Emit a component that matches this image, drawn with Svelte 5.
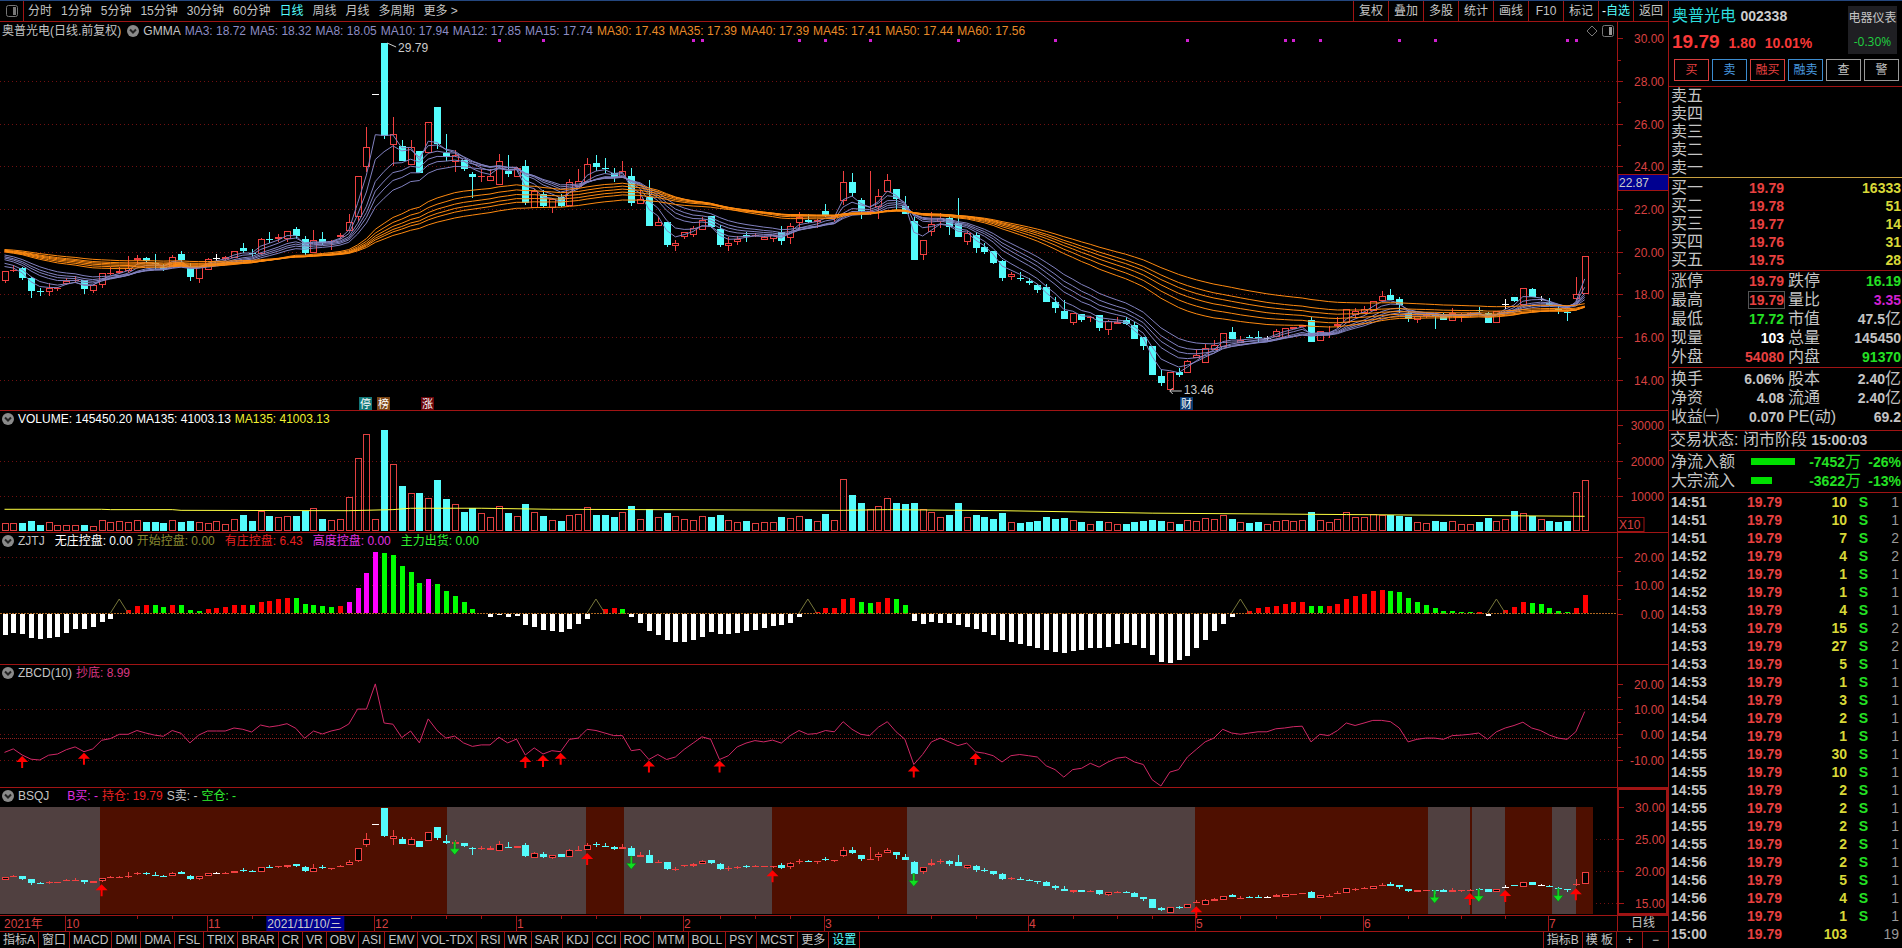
<script>
    const periods = ["分时", "1分钟", "5分钟", "15分钟", "30分钟", "60分钟", "日线", "周线", "月线", "多周期", "更多 >"];
    const tools = ["复权", "叠加", "多股", "统计", "画线", "F10", "标记", "自选", "返回"];
    const indicators = ["指标A", "窗口", "MACD", "DMI", "DMA", "FSL", "TRIX", "BRAR", "CR", "VR", "OBV", "ASI", "EMV", "VOL-TDX", "RSI", "WR", "SAR", "KDJ", "CCI", "ROC", "MTM", "BOLL", "PSY", "MCST", "更多", "设置"];

    // open, high, low, close
    const candles = [
        [18.64,19.09,18.55,19.09],[19.09,19.37,19.03,19.16],[19.23,19.28,18.67,18.77],[18.77,18.83,17.83,18.17],[18.15,18.31,17.92,18.14],
        [18.09,18.52,17.94,18.28],[18.28,18.32,18.13,18.30],[18.48,18.75,18.42,18.62],[18.60,18.86,18.52,18.67],[18.67,18.67,18.02,18.25],
        [18.17,18.42,18.08,18.42],[18.42,18.98,18.31,18.98],[18.98,19.30,18.92,19.02],[19.00,19.30,18.95,19.09],[19.10,19.81,18.98,19.25],
        [19.59,19.84,19.40,19.70],[19.70,19.77,19.45,19.58],[19.45,19.89,19.20,19.40],[19.30,19.40,19.10,19.20],[19.30,19.84,19.30,19.75],
        [19.90,20.03,19.53,19.60],[19.27,19.45,18.60,18.83],[18.73,19.30,18.55,19.30],[19.16,19.70,19.16,19.64],[19.69,19.89,19.55,19.69],
        [19.65,19.80,19.55,19.75],[19.70,20.02,19.70,20.02],[20.17,20.41,19.92,20.03],[19.95,20.14,19.80,19.92],[19.90,20.66,19.90,20.58],
        [20.58,20.90,20.42,20.53],[20.60,20.83,20.47,20.70],[20.58,20.95,20.45,20.95],[21.06,21.14,20.62,20.75],[20.60,20.73,19.84,19.95],
        [19.92,21.02,19.92,20.53],[20.60,20.90,20.30,20.42],[20.45,20.53,20.08,20.52],[20.70,20.86,20.58,20.77],[20.95,21.78,20.95,21.38],
        [21.61,23.53,21.40,23.53],[23.98,25.84,23.75,24.91],[27.37,27.37,27.37,27.37],[29.79,29.79,25.27,25.41],[25.02,26.31,24.02,25.50],
        [24.97,25.23,24.25,24.25],[24.05,25.23,24.05,24.91],[24.72,24.72,23.69,23.69],[24.61,26.06,24.61,26.06],[26.78,26.78,24.83,25.06],
        [24.61,25.53,24.25,24.42],[24.19,24.77,23.75,24.53],[24.30,24.30,23.80,23.88],[23.64,23.75,22.52,23.52],[23.48,23.88,23.28,23.53],
        [23.33,23.88,23.33,23.53],[23.11,24.59,23.11,24.23],[23.80,24.55,23.52,23.66],[23.52,23.95,23.52,23.90],[24.02,24.30,22.20,22.28],
        [22.03,22.95,22.03,22.84],[22.70,22.89,22.08,22.16],[22.03,22.45,21.83,22.45],[22.58,22.70,22.10,22.14],[22.16,23.41,22.16,23.25],
        [23.05,23.88,23.05,23.31],[23.28,24.39,23.28,24.11],[24.16,24.53,23.78,23.98],[23.92,24.39,23.70,23.89],[23.70,23.90,23.28,23.48],
        [23.44,24.23,23.44,23.77],[23.55,23.92,22.16,22.28],[22.25,22.90,22.25,22.48],[22.55,23.34,21.22,21.22],[21.19,21.64,21.19,21.38],
        [21.38,21.38,20.23,20.31],[20.28,20.55,20.05,20.38],[20.70,20.91,20.58,20.91],[20.80,21.20,20.67,21.09],[21.03,21.64,21.03,21.48],
        [21.67,21.67,21.10,21.17],[21.05,21.25,20.23,20.33],[20.28,20.70,20.05,20.39],[20.45,20.73,20.33,20.61],[20.78,20.94,20.47,20.75],
        [20.77,20.86,20.70,20.80],[20.56,20.75,20.56,20.70],[20.59,20.77,20.47,20.77],[20.91,21.20,20.33,20.52],[20.62,21.36,20.34,21.19],
        [21.36,21.84,21.02,21.61],[21.50,21.78,21.33,21.41],[21.41,21.55,21.09,21.48],[21.91,22.23,21.60,21.73],[21.60,21.70,21.40,21.66],
        [22.39,23.80,22.20,23.25],[23.27,23.69,22.61,22.77],[22.42,22.52,21.53,21.92],[21.83,23.80,21.70,21.90],[22.10,22.94,21.53,22.61],
        [22.81,23.64,22.81,23.34],[22.94,22.94,21.92,22.45],[22.14,22.61,21.78,21.78],[21.44,21.60,19.61,19.61],[19.86,20.55,19.60,20.55],
        [20.91,21.84,20.75,21.28],[21.40,21.80,21.10,21.56],[21.56,21.72,20.80,21.14],[21.36,22.52,20.70,20.70],[20.47,20.97,20.33,20.88],
        [20.77,20.94,19.92,20.17],[20.22,20.39,19.89,20.00],[20.03,20.03,19.40,19.48],[19.58,19.62,18.64,18.77],[18.83,19.05,18.67,18.94],
        [18.78,19.05,18.62,18.75],[18.62,18.77,18.42,18.55],[18.42,18.50,18.05,18.22],[18.34,18.50,17.66,17.66],[17.64,17.89,17.11,17.37],
        [17.23,17.73,16.86,16.86],[16.67,17.12,16.56,17.12],[17.06,17.06,16.70,16.77],[16.87,17.00,16.72,16.95],[17.03,17.03,16.30,16.44],
        [16.31,16.80,16.11,16.73],[16.62,16.92,16.62,16.70],[16.80,16.95,16.55,16.62],[16.55,16.70,15.92,15.92],[15.98,15.98,15.40,15.59],
        [15.58,15.58,14.23,14.23],[14.17,14.45,13.72,13.86],[13.53,14.36,13.46,14.36],[14.34,14.56,14.14,14.23],[14.30,14.90,14.30,14.86],
        [15.00,15.42,15.00,15.17],[14.77,15.67,14.77,15.47],[15.40,15.86,15.40,15.60],[15.55,16.17,15.55,16.17],[16.23,16.48,15.92,15.92],
        [15.70,16.05,15.70,15.86],[16.00,16.11,15.94,15.94],[15.98,16.28,15.78,15.97],[15.95,16.05,15.80,15.95],[15.98,16.37,15.98,16.27],
        [15.94,16.40,15.94,16.40],[16.38,16.45,16.38,16.45],[16.45,16.58,16.45,16.58],[16.80,16.92,15.77,15.77],[15.83,16.27,15.80,16.27],
        [16.10,16.50,15.95,16.17],[16.53,16.95,16.40,16.60],[16.64,17.30,16.64,17.30],[17.03,17.37,16.90,17.23],[17.14,17.45,17.14,17.30],
        [17.20,17.70,17.20,17.67],[17.67,18.17,17.67,17.90],[17.97,18.25,17.73,17.73],[17.78,17.89,17.14,17.48],[17.14,17.20,16.70,16.83],
        [16.77,16.98,16.67,16.98],[16.97,17.10,16.90,17.02],[17.05,17.10,16.37,17.00],[17.03,17.14,16.81,16.81],[16.73,17.36,16.73,17.11],
        [17.00,17.12,16.70,17.05],[17.03,17.15,16.95,17.10],[17.25,17.42,17.10,17.20],[17.14,17.18,16.66,16.66],[16.67,17.22,16.67,17.22],
        [17.53,17.78,17.30,17.53],[17.87,17.87,17.65,17.70],[17.50,18.28,17.50,18.28],[18.25,18.30,17.87,17.87],[17.78,17.92,17.68,17.78],
        [17.60,17.82,17.45,17.50],[17.31,17.48,17.07,17.26],[17.17,17.20,16.76,17.14],[17.80,18.80,17.72,17.99],[17.99,19.79,17.99,19.79],
    ];

    // hundreds of lots
    const volumes = [
        22,22,22,28,16,25,16,16,16,16,13,30,25,28,25,30,25,25,22,30,25,28,25,22,28,19,33,45,28,56,
        42,39,42,42,56,64,33,30,33,96,206,275,33,287,190,127,107,107,92,144,90,76,53,64,50,39,70,50,42,76,
        53,42,30,28,45,48,68,46,44,40,52,69,32,62,40,50,42,33,30,42,40,46,30,24,28,22,24,26,38,36,
        42,32,28,48,30,148,103,79,62,70,93,79,76,79,62,52,40,44,79,40,44,38,34,50,24,22,24,28,40,34,
        35,30,24,20,28,24,20,18,26,28,30,28,26,18,30,28,36,34,45,34,24,22,24,20,28,30,28,30,52,30,
        26,34,52,40,38,48,46,44,42,38,26,22,28,24,28,20,18,24,36,28,34,55,50,42,34,28,26,28,110,145,
    ];
    const volumeAverage = [[0, 61], [11, 61], [12, 60], [19, 60], [20, 58], [39, 57], [44, 60], [46, 64], [54, 64], [62, 61], [95, 58], [100, 60], [113, 57], [130, 50], [152, 46], [179, 41]];

    const control = [
        -7.5,-6.8,-7.2,-8.6,-8.9,-8.6,-8.2,-6.8,-5.4,-5.4,-4.7,-2.9,-1.9,0,1.2,2.6,2.9,2.9,2.2,2.9,2.9,1.2,0.8,1.5,1.9,2.2,2.9,3,2.9,4,
        4.4,5.1,5.4,5.4,3.3,2.9,2.6,2.2,2.6,4,8.9,14.2,21.6,21.3,20.6,16.7,14.6,10.7,12.1,10.4,7.9,6.1,4,1.5,0,-1.2,-0.5,-1.2,-0.8,-3.8,
        -4.5,-5.8,-6.1,-6.3,-5.3,-3.5,-1.8,0,1.7,1.8,1.6,-1,-3,-6,-7.5,-9,-10,-9.8,-9,-8,-6.5,-7,-7,-6.8,-6,-5.5,-5,-4.3,-4,-3,
        -1,0,0.4,1.8,2,5,5.6,4.2,3.8,4,5.5,5,3,-2.5,-3.5,-2.8,-3,-3.3,-4,-4.5,-5.2,-6.2,-7.5,-9,-10,-10.6,-11.2,-11.8,-12.5,-13.3,
        -13.6,-13.2,-12.6,-12,-12,-11.5,-10.7,-10.3,-11,-12,-14.5,-17,-17.3,-16.2,-14.8,-12,-9,-6,-3.5,-1.2,0,1,1.8,2.2,2.8,3.4,4,4.2,2.6,2.5,
        2.6,3.4,5.2,6.2,7,7.8,8.2,8,7.4,5.4,4,3,1.8,1,0.8,0.5,0.4,0.6,-0.8,0,1.2,2.4,4,3.8,3.2,2,1,0.5,2,6.4,
    ];
    const highControl = [39, 40, 41, 42, 48];
    const peaks = [13, 67, 91, 140, 169];

    const bottom = [
        -7.2,-5.8,-8.2,-9.9,-10.2,-8.3,-7.8,-6.1,-5,-6.9,-5.8,-2.4,-1.7,0,0,1.5,0.5,-0.3,-0.8,1.5,0.4,-3.4,-0.3,1.3,1.3,1.3,2.5,2,0.9,3.7,
        2.9,3.4,4.2,2.4,-1.6,1.3,0.1,1.3,2.1,4.1,10,10,20,4.5,4,-1.3,1.3,-3.4,6.1,1.5,-1.5,-0.7,-3.4,-4.8,-4.2,-4.2,-1.2,-3.4,-1.9,-8.2,
        -5.4,-7.8,-6.5,-6.9,-2,-1.5,2,1.5,0.5,-0.5,-0.5,-6.5,-6,-10,-8,-10,-9,-6,-3.5,-1,-2,-10,-8.5,-5,-3.5,-2.5,-3,-2.3,-3.5,-0.5,
        1.5,0,0.3,1.5,1,5,2,0,-0.5,2.8,5,1,-2,-12,-8,-3,-1.5,-3,-4.5,-3.5,-7,-7.5,-8.5,-11,-8.5,-8,-8.5,-9,-12.5,-14,
        -17,-14,-13.5,-11.5,-13,-11,-9.5,-9,-11,-12,-18,-20.5,-15,-14,-9,-6,-3,-1.5,2,0.5,0,0.5,1,1,2.2,2.5,3,3.2,-3,0,
        -0.5,1.5,4.5,3.5,4.5,5.5,5.5,5,2.5,-3,-2,-1.5,-1.5,-2,-0.5,-0.3,0,0.5,-2,1,2.5,3.5,4.8,2.5,1.5,-0.3,-1.5,-2,1,9,
    ];
    const bottomSignals = [2, 9, 59, 61, 63, 73, 81, 103, 110];

    const notices = [56, 61, 78, 79, 90, 93, 98, 108, 119, 134, 145, 146, 149, 158, 162, 177, 178];
    const badges = [
        { at: 41, text: "停", color: "#137878" },
        { at: 43, text: "榜", color: "#7c4514" },
        { at: 48, text: "涨", color: "#6b0509" },
        { at: 134, text: "财", color: "#0b3a70" },
    ];

    // holding (true) and flat (false) stretches, by bar
    const stretches = [[-0.5, 10.8, false], [10.8, 50.1, true], [50.1, 65.9, false], [65.9, 70.2, true], [70.2, 86.9, false], [86.9, 102.2, true], [102.2, 134.9, false], [134.9, 161.2, true], [161.2, 166, false], [166, 166.2, true], [166.2, 170, false], [170, 175.3, true], [175.3, 178, false], [178, 179.9, true]];
    const buys = [11, 66, 87, 135, 166, 170, 178];
    const sells = [51, 71, 103, 162, 167, 176];

    const months = [[7, "10"], [23, "11"], [42, "12"], [58, "1"], [77, "2"], [93, "3"], [116, "4"], [135, "5"], [154, "6"], [175, "7"]];
    const weeks = [15, 19, 28, 46, 50, 54, 63, 67, 72, 81, 85, 89, 99, 105, 110, 121, 126, 130, 140, 144, 149, 159, 165, 170];

    const averages = [
        [3, 19.3, "18.72"], [5, 19.45, "18.32"], [8, 19.62, "18.05"], [10, 19.7, "17.94"], [12, 19.76, "17.85"], [15, 19.84, "17.74"],
        [30, 19.98, "17.43"], [35, 20, "17.39"], [40, 20.02, "17.39"], [45, 20.04, "17.41"], [50, 20.06, "17.44"], [60, 20.1, "17.56"],
    ];

    const bids = [["买一", "19.79", 16333], ["买二", "19.78", 51], ["买三", "19.77", 14], ["买四", "19.76", 31], ["买五", "19.75", 28]];
    const asks = ["卖五", "卖四", "卖三", "卖二", "卖一"];
    // label, value, colour, unit
    const quote = [
        [["涨停", "19.79", "red"], ["跌停", "16.19", "green"]],
        [["最高", "19.79", "red boxed"], ["量比", "3.35", "purple"]],
        [["最低", "17.72", "green"], ["市值", "47.5", "", "亿"]],
        [["现量", "103", "white"], ["总量", "145450", ""]],
        [["外盘", "54080", "red"], ["内盘", "91370", "green"]],
    ];
    const finance = [
        [["换手", "6.06%", ""], ["股本", "2.40", "", "亿"]],
        [["净资", "4.08", ""], ["流通", "2.40", "", "亿"]],
        [["收益㈠", "0.070", ""], ["PE(动)", "69.2", ""]],
    ];
    const flows = [["净流入额", 44, "-7452", "-26%"], ["大宗流入", 21, "-3622", "-13%"]];
    const trades = [
        ["14:51", 10, 1], ["14:51", 10, 1], ["14:51", 7, 2], ["14:52", 4, 2], ["14:52", 1, 1], ["14:52", 1, 1], ["14:53", 4, 1], ["14:53", 15, 2], ["14:53", 27, 2],
        ["14:53", 5, 1], ["14:53", 1, 1], ["14:54", 3, 1], ["14:54", 2, 1], ["14:54", 1, 1], ["14:55", 30, 1], ["14:55", 10, 1], ["14:55", 2, 1],
        ["14:55", 2, 1], ["14:55", 2, 1], ["14:55", 2, 1], ["14:56", 2, 1], ["14:56", 5, 1], ["14:56", 4, 1], ["14:56", 1, 1], ["15:00", 103, 19],
    ];

    let width = 1617;
    $: step = (width - 28) / 180;
    $: x = (i) => 4.5 + i * step;

    // value to y inside each panel
    const yMain = (v) => 16.3 + (30 - v) * 21.33;
    const yVol = (v) => 119.7 - v * 0.351;
    const yCtl = (v) => 80.5 - v * 2.84;
    const yBot = (v) => 69.3 - v * 2.52;
    const yBs = (v) => 18.7 + (30 - v) * 6.43;

    function ema(n, seed) {
        let last = seed;
        return candles.map((c, i) => {
            if (i > 0) last += (c[3] - last) * 2 / (n + 1);
            return last;
        });
    }

    const lines = averages.map(([n, seed]) => ({ color: n < 20 ? "#8282c0" : "#ff8a10", values: ema(n, seed) }));

    function points(values, y, x) {
        return values.map((v, i) => `${x(i).toFixed(1)},${y(v).toFixed(1)}`).join(" ");
    }

    function tone(c) {
        if (c[3] > c[0]) return "up";
        return c[3] < c[0] ? "down" : "flat";
    }

    function controlColor(v, i) {
        if (v < 0) return "#fff";
        if (highControl.includes(i)) return "#f0f";
        return v > control[i - 1] ? "#f00" : "#0f0";
    }
</script>

{#snippet toggle()}
    <svg class="toggle" width="12" height="12" viewBox="0 0 12 12">
        <circle cx="6" cy="6" r="6" fill="#8a8a8a" />
        <path d="M3 4.5 6 7.5 9 4.5" fill="none" stroke="#222" stroke-width="2" />
    </svg>
{/snippet}

{#snippet candle(c, cx, y, fill)}
    {@const t = tone(c)}
    {@const top = Math.round(y(Math.max(c[0], c[3])))}
    {@const low = Math.round(y(Math.min(c[0], c[3])))}
    {@const mid = Math.round(cx)}
    <g class={t}>
        <path d="M{mid + 0.5} {Math.round(y(c[1]))}V{top}M{mid + 0.5} {low}V{Math.round(y(c[2]))}" />
        {#if low - top < 2}
            <rect class="solid" x={mid - 3} y={top} width="7" height={Math.max(1, low - top)} />
        {:else if t == "up"}
            <rect x={mid - 2.5} y={top + 0.5} width="6" height={low - top - 1} {fill} />
        {:else}
            <rect class="solid" x={mid - 3} y={top} width="7" height={low - top} />
        {/if}
    </g>
{/snippet}

{#snippet grid(ys)}
    {#each ys as y}
        <line class="dots" x1="0" x2={width} y1={Math.round(y) + 0.5} y2={Math.round(y) + 0.5} />
    {/each}
{/snippet}

{#snippet axis(labels, minor)}
    {#each labels as [y, text]}
        <path class="tick" d="M0 {Math.round(y) + 0.5}h5" />
        <text x="46" y={Math.round(y) + 5} text-anchor="end">{text}</text>
    {/each}
    {#each minor as y}
        <path class="tick" d="M0 {Math.round(y) + 0.5}h3" />
    {/each}
{/snippet}

{#snippet arrowUp(cx, y)}
    <path d="M{cx} {y}l6 6h-5v6h-2v-6h-5z" fill="#f00" />
{/snippet}

{#snippet pairs(rows)}
    {#each rows as row}
        <tr>
            {#each row as [label, value, color, unit]}
                <th>{label}</th>
                <td><b class={color}>{value}</b>{unit ?? ""}</td>
            {/each}
        </tr>
    {/each}
{/snippet}

<div class="app">
    <main>
        <nav class="toolbar">
            <button class="side" aria-label="侧栏">
                <svg width="12" height="12" viewBox="0 0 12 12"><rect x=".5" y=".5" width="11" height="11" rx="2" fill="none" stroke="#777" /><rect x="7" y="2" width="3" height="8" fill="#777" /></svg>
            </button>
            {#each periods as p}
                <button class="period" class:active={p == "日线"}>{p}</button>
            {/each}
            <div class="tools">
                {#each tools as t}
                    <button class:active={t == "自选"}>{#if t == "自选"}<span>-</span>{/if}{t}</button>
                {/each}
            </div>
        </nav>

        <section class="panel price">
            <div class="plot" bind:clientWidth={width}>
                <header>
                    <span class="name">奥普光电(日线.前复权)</span>
                    {@render toggle()}
                    <span>GMMA</span>
                    {#each averages as [n, , value]}
                        <span class={n < 20 ? "short" : "long"}>MA{n}: {value}</span>
                    {/each}
                    <svg class="marks" width="28" height="12" viewBox="0 0 28 12" fill="none" stroke="#777">
                        <path d="M6 1l5 5-5 5-5-5z" />
                        <rect x="16.5" y=".5" width="11" height="11" rx="2" />
                        <rect x="23" y="2" width="3" height="8" fill="#999" stroke="none" />
                    </svg>
                </header>
                <svg viewBox="0 18 {width} 370" height="370">
                    {@render grid([28, 26, 24, 22, 20, 18, 16, 14].map(yMain))}
                    {#each notices as i}
                        <rect x={Math.round(x(i)) - 1} y="17" width="3" height="3" fill="#d020d0" />
                    {/each}
                    {#each candles as c, i}
                        {@render candle(c, x(i), yMain, "none")}
                    {/each}
                    {#each lines as l}
                        <polyline points={points(l.values, yMain, x)} stroke={l.color} />
                    {/each}
                    <path d="M{x(43) + 3} 21l9 4M{x(132)} 369h12m-12 0l3-3m-3 3l3 3" stroke="#ccc" fill="none" />
                    <text class="value" x={x(43) + 14} y="30">29.79</text>
                    <text class="value" x={x(132) + 14} y="372">13.46</text>
                    {#each badges as b}
                        <rect x={Math.round(x(b.at)) - 7} y="375" width="13" height="13" fill={b.color} />
                        <text class="badge" x={Math.round(x(b.at)) - 0.5} y="386" text-anchor="middle">{b.text}</text>
                    {/each}
                </svg>
            </div>
            <svg class="axis" height="388">
                {@render axis([30, 28, 26, 24, 22, 20, 18, 16, 14].map((v) => [yMain(v), v.toFixed(2)]), [29, 27, 25, 23, 21, 19, 17, 15].map(yMain))}
                <rect x="0" y="152.5" width="51" height="16" fill="#000090" stroke="#a01414" />
                <text class="value" x="1" y="165">22.87</text>
            </svg>
        </section>

        <section class="panel volume">
            <div class="plot">
                <header class="white">
                    {@render toggle()}
                    <span>VOLUME: 145450.20</span>
                    <span>MA135: 41003.13</span>
                    <span class="yellow">MA135: 41003.13</span>
                </header>
                <svg viewBox="0 16 {width} 105" height="105">
                    {@render grid([yVol(200), yVol(100)])}
                    {#each volumes as v, i}
                        {@const y = Math.round(yVol(v))}
                        {@const left = Math.round(x(i)) - 3}
                        {#if candles[i][3] < candles[i][0]}
                            <rect class="bar" x={left} {y} width="7" height={120 - y} fill="#54fcfc" />
                        {:else}
                            <rect class="bar" x={left + 0.5} y={y + 0.5} width="6" height={119 - y} fill="none" stroke="#e04040" />
                        {/if}
                    {/each}
                    <polyline points={volumeAverage.map(([i, v]) => `${x(i)},${yVol(v)}`).join(" ")} stroke="#ffff40" />
                </svg>
            </div>
            <svg class="axis" height="121">
                {@render axis([[yVol(300), "30000"], [yVol(200), "20000"], [yVol(100), "10000"]], [yVol(250), yVol(150)])}
                <rect x="-1" y="106.5" width="27" height="14" fill="none" stroke="#a01414" />
                <text x="1" y="118">X10</text>
            </svg>
        </section>

        <section class="panel control">
            <div class="plot">
                <header>
                    {@render toggle()}
                    <span>ZJTJ</span>
                    <span class="white first">无庄控盘: 0.00</span>
                    <span class="olive">开始控盘: 0.00</span>
                    <span class="crimson wide">有庄控盘: 6.43</span>
                    <span class="magenta wide">高度控盘: 0.00</span>
                    <span class="lime wide">主力出货: 0.00</span>
                </header>
                <svg viewBox="0 16 {width} 115" height="115">
                    {@render grid([yCtl(20), yCtl(10)])}
                    {#each control as v, i}
                        {@const y = Math.round(yCtl(Math.max(v, 0)))}
                        <rect class="bar" x={Math.round(x(i)) - 2} {y} width="5" height={Math.round(Math.abs(v) * 2.84)} fill={controlColor(v, i)} />
                    {/each}
                    <line x1="0" x2={width} y1="80.5" y2="80.5" stroke="#b06820" stroke-dasharray="2 1" />
                    {#each peaks as i}
                        <path d="M{x(i - 1)} 80L{x(i)} 66L{x(i + 1)} 80" fill="none" stroke="#77773a" />
                    {/each}
                </svg>
            </div>
            <svg class="axis" height="131">
                {@render axis([[yCtl(20), "20.00"], [yCtl(10), "10.00"], [yCtl(0), "0.00"]], [yCtl(15), yCtl(5)])}
            </svg>
        </section>

        <section class="panel bottom">
            <div class="plot">
                <header>
                    {@render toggle()}
                    <span>ZBCD(10)</span>
                    <span class="pink">抄底: 8.99</span>
                </header>
                <svg viewBox="0 16 {width} 106" height="106">
                    {@render grid([yBot(10), yBot(0), yBot(-10)])}
                    <line class="dots strong" x1="0" x2={width} y1="73.5" y2="73.5" />
                    <polyline points={points(bottom, yBot, x)} stroke="#d02866" />
                    {#each bottomSignals as i}
                        {@render arrowUp(x(i), yBot(bottom[i]) + 1)}
                    {/each}
                </svg>
            </div>
            <svg class="axis" height="122">
                {@render axis([20, 10, 0, -10].map((v) => [yBot(v), v.toFixed(2)]), [yBot(15), yBot(5), yBot(-5)])}
            </svg>
        </section>

        <section class="panel signals">
            <div class="plot">
                <header>
                    {@render toggle()}
                    <span>BSQJ</span>
                    <span class="magenta buy">B买: -</span>
                    <span class="crimson">持仓: 19.79</span>
                    <span>S卖: -</span>
                    <span class="lime">空仓: -</span>
                </header>
                <svg viewBox="0 16 {width} 111" height="111">
                    {@render grid([yBs(25), yBs(20), yBs(15)])}
                    {#each stretches as [from, to, holding]}
                        <rect class="bar" x={x(from)} y="19" width={x(to) - x(from)} height="107" fill={holding ? "#4e0f00" : "#504040"} />
                    {/each}
                    {#each candles as c, i}
                        {@render candle(c, x(i), yBs, "#000")}
                    {/each}
                    {#each buys as i}
                        {@render arrowUp(x(i), yBs(candles[i][0]) + 3)}
                    {/each}
                    {#each sells as i}
                        <path d="M{x(i)} {yBs(candles[i][3]) + 13}l5-6h-4v-7h-2v7h-4z" fill="#10e020" stroke="#067010" stroke-width=".5" />
                    {/each}
                </svg>
            </div>
            <svg class="axis selected">
                {@render axis([30, 25, 20, 15].map((v) => [yBs(v) - 2, v.toFixed(2)]), [])}
            </svg>
        </section>

        <div class="timeline">
            <svg class="plot" height="15" viewBox="0 0 {width} 15">
                <text x="4" y="12">2021年</text>
                {#each weeks as i}
                    <path class="tick" d="M{Math.round(x(i)) + 0.5} 0v3" />
                {/each}
                {#each months as [i, name]}
                    <path class="tick" d="M{Math.round(x(i)) - 0.5} 0v15" />
                    <text x={Math.round(x(i))} y="12">{name}</text>
                {/each}
                <rect x={x(30) - 3} y="0" width="78" height="15" fill="#000090" />
                <text class="value" x={x(30) - 2} y="12">2021/11/10/三</text>
            </svg>
            <button>日线</button>
        </div>

        <nav class="tabs">
            {#each indicators as name}
                <button class:active={name == "设置"}>{name}</button>
            {/each}
            <div class="end">
                <button>指标B</button>
                <button>模 板</button>
                <button class="zoom">+</button>
                <button class="zoom">−</button>
            </div>
        </nav>
    </main>

    <aside>
        <div class="stock">
            <div>
                <h1>奥普光电 <b>002338</b></h1>
                <p><strong>19.79</strong><b>1.80</b><b>10.01%</b></p>
            </div>
            <a class="industry" href="#industry">电器仪表<span>-0.30%</span></a>
        </div>
        <div class="orders">
            <button class="red">买</button>
            <button class="blue">卖</button>
            <button class="red">融买</button>
            <button class="blue">融卖</button>
            <button>查</button>
            <button>警</button>
        </div>
        <table class="book asks">
            <tbody>
                {#each asks as a}
                    <tr><th>{a}</th><td></td><td></td></tr>
                {/each}
            </tbody>
        </table>
        <table class="book bids">
            <tbody>
                {#each bids as [label, price, count]}
                    <tr><th>{label}</th><td class="red">{price}</td><td class="yellow">{count}</td></tr>
                {/each}
            </tbody>
        </table>
        <table class="pairs quote">
            <tbody>{@render pairs(quote)}</tbody>
        </table>
        <table class="pairs finance">
            <tbody>{@render pairs(finance)}</tbody>
        </table>
        <p class="status">交易状态: 闭市阶段 <b>15:00:03</b></p>
        <table class="flows">
            <tbody>
                {#each flows as [label, size, amount, share]}
                    <tr>
                        <th>{label}</th>
                        <td class="meter"><i style="width: {size}px"></i></td>
                        <td><b>{amount}</b>万</td>
                        <td><b>{share}</b></td>
                    </tr>
                {/each}
            </tbody>
        </table>
        <table class="trades">
            <tbody>
                {#each trades as [time, count, deals], i}
                    <tr>
                        <td>{time}</td>
                        <td class="red">19.79</td>
                        <td class="yellow">{count}</td>
                        <td class="green">{i < 24 ? "S" : ""}</td>
                        <td class="deals">{deals}</td>
                    </tr>
                {/each}
            </tbody>
        </table>
    </aside>
</div>

<style>
    :global(body) {
        margin: 0;
        background: #000;
    }

    .app {
        display: flex;
        min-height: 100vh;
        box-sizing: border-box;
        border-top: 1px solid #24477f;
        background: #000;
        color: #c4c4c4;
        font: 12px/16px "Liberation Sans", "Noto Sans CJK SC", sans-serif;
        overflow: hidden;
    }

    button {
        margin: 0;
        padding: 0;
        border: 0;
        background: none;
        color: inherit;
        font: inherit;
        white-space: nowrap;
        cursor: pointer;
    }

    main {
        flex: 1;
        min-width: 0;
    }

    .toolbar {
        display: flex;
        height: 20px;
        border-bottom: 1px solid #a01414;
    }

    .side {
        display: flex;
        align-items: center;
        justify-content: center;
        width: 24px;
        margin-right: 4px;
        border-right: 1px solid #a01414;
    }

    .period {
        margin-right: 9px;
    }

    .active {
        color: #54fcfc;
    }

    .tools {
        display: flex;
        margin-left: auto;
    }

    .tools button {
        width: 35px;
        border-left: 1px solid #a01414;
    }

    .tools span {
        color: #fff;
    }

    .panel {
        display: flex;
        border-bottom: 1px solid #a01414;
    }

    .plot {
        flex: 1;
        min-width: 0;
    }

    .plot svg:not(.toggle, .marks) {
        display: block;
        width: 100%;
        overflow: visible;
    }

    header {
        display: flex;
        align-items: center;
        gap: 4px;
        height: 16px;
        padding-left: 2px;
        white-space: nowrap;
    }

    .price header {
        height: 18px;
    }

    .name {
        margin-right: 2px;
    }

    .marks {
        margin: 0 3px 0 auto;
    }

    .axis {
        flex: none;
        width: 50px;
        border-left: 1px solid #a01414;
    }

    .selected {
        width: 47px;
        height: 123px;
        border: 2px solid #a01414;
    }

    text {
        fill: #d84040;
    }

    text.value {
        fill: #ccc;
    }

    text.badge {
        fill: #fff;
        font-size: 11px;
    }

    .tick {
        stroke: #a01414;
        fill: none;
    }

    .dots {
        stroke: #701010;
        stroke-dasharray: 1 3;
    }

    .strong {
        stroke: #902020;
        stroke-dasharray: 1 1;
    }

    polyline {
        fill: none;
    }

    g, .bar {
        shape-rendering: crispEdges;
    }

    .up {
        stroke: #f04040;
        --tone: #f04040;
    }

    .down {
        stroke: #54fcfc;
        --tone: #54fcfc;
    }

    .flat {
        stroke: #fff;
        --tone: #fff;
    }

    .solid {
        fill: var(--tone);
        stroke: none;
    }

    .short {
        color: #8c8cc4;
    }

    .long {
        color: #e88a28;
    }

    .white {
        color: #fff;
    }

    .yellow {
        color: #f0f030;
    }

    .olive {
        color: #8a8a30;
    }

    .crimson {
        color: #e82020;
    }

    .magenta {
        color: #e030e0;
    }

    .lime {
        color: #30f030;
    }

    .pink {
        color: #d83880;
    }

    .first, .wide {
        margin-left: 6px;
    }

    .buy {
        margin-left: 14px;
    }

    .timeline {
        display: flex;
        height: 15px;
        border-bottom: 1px solid #a01414;
    }

    .timeline button {
        width: 51px;
        border-left: 1px solid #a01414;
        line-height: 15px;
    }

    .tabs {
        display: flex;
        height: 16px;
    }

    .tabs button {
        padding: 0 3px;
        border-right: 1px solid #a01414;
    }

    .end {
        display: flex;
        margin-left: auto;
        border-left: 1px solid #a01414;
    }

    .end .zoom {
        width: 26px;
    }

    .end .zoom:last-child {
        width: 25px;
        border-right: 0;
    }

    aside {
        flex: none;
        width: 233px;
        border-left: 1px solid #a01414;
        font-size: 16px;
    }

    aside b {
        font-size: 14px;
        line-height: 14px;
    }

    aside .yellow {
        color: #d8d838;
    }

    .stock {
        display: flex;
        justify-content: space-between;
        height: 48px;
        padding: 5px 5px 0 3px;
    }

    h1 {
        margin: 1px 0 0;
        color: #2cdcdc;
        font-size: 16px;
        font-weight: normal;
        line-height: 18px;
    }

    h1 b {
        color: #ccc;
    }

    .stock p {
        display: flex;
        align-items: baseline;
        gap: 9px;
        margin: 5px 0 0;
        color: #f83838;
        line-height: 24px;
    }

    .stock strong {
        font-size: 19px;
    }

    .industry {
        width: 49px;
        height: 48px;
        background: #1f1f23;
        color: #c4c4c4;
        font: 12px/24px "Open Sans", "Noto Sans CJK SC", sans-serif;
        text-align: center;
        text-decoration: none;
    }

    .industry span {
        display: block;
        color: #20d040;
    }

    .orders {
        display: flex;
        gap: 3px;
        padding: 5px 3px 5px 5px;
        border-bottom: 1px solid #a01414;
        font-size: 12px;
    }

    .orders button {
        flex: 1;
        height: 22px;
        border: 1px solid #999;
    }

    .orders .red {
        border-color: #d83c3c;
    }

    .orders .blue {
        border-color: #3c8cd0;
        color: #4a9ce0;
    }

    table {
        width: 100%;
        border-spacing: 0;
        table-layout: fixed;
    }

    th, td {
        height: 18px;
        padding: 0;
        line-height: 18px;
        font-weight: normal;
        text-align: right;
        white-space: nowrap;
    }

    th {
        text-align: left;
    }

    .book, .pairs, .status, .flows {
        border-bottom: 1px solid #a01414;
    }

    .book th {
        width: 50px;
        padding-left: 2px;
    }

    .book td:nth-child(2) {
        width: 63px;
    }

    .book.asks {
        border-color: #c8a040;
    }

    .book td, .trades td {
        font-size: 14px;
        font-weight: bold;
    }

    .book td:last-child {
        padding-right: 1px;
    }

    .bids {
        padding: 1px 0;
    }

    .pairs th, .pairs td, .flows th, .flows td {
        height: 19px;
        line-height: 18px;
    }

    .quote {
        padding-bottom: 1px;
    }

    .finance {
        padding: 1px 0 4px;
    }

    .pairs th:nth-child(1) {
        width: 50px;
        padding-left: 2px;
    }

    .pairs td:nth-child(2) {
        width: 63px;
    }

    .pairs th:nth-child(3) {
        width: 46px;
        padding-left: 4px;
    }

    .pairs td:last-child {
        padding-right: 1px;
    }

    .boxed {
        outline: 1px solid #555;
    }

    .red {
        color: #e84040;
    }

    .green {
        color: #24e024;
    }

    .purple {
        color: #d020d0;
    }

    .status {
        height: 19px;
        margin: 0;
        padding-left: 1px;
        line-height: 18px;
        white-space: nowrap;
    }

    .flows {
        padding: 1px 0 2px;
        color: #24e024;
    }

    .flows th {
        width: 80px;
        padding-left: 2px;
        color: #c4c4c4;
    }

    .meter {
        width: 50px;
    }

    .meter i {
        display: block;
        height: 7px;
        background: #00e000;
    }

    .flows td:last-child {
        width: 40px;
        padding-right: 1px;
    }

    .trades td:first-child {
        width: 56px;
        padding-left: 2px;
        text-align: left;
    }

    .trades td:nth-child(2) {
        width: 55px;
    }

    .trades td:nth-child(3) {
        width: 65px;
    }

    .trades td:nth-child(4) {
        width: 21px;
    }

    .trades .deals {
        padding-right: 3px;
        color: #999;
        font-weight: normal;
    }
</style>
